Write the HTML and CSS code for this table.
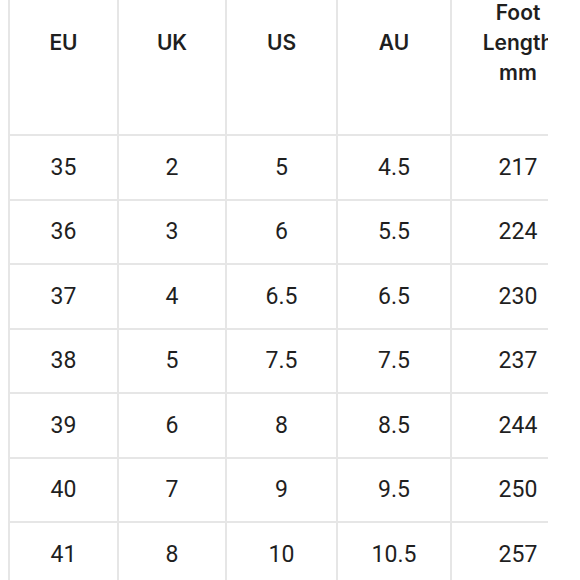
FILE: index.html
```html
<!DOCTYPE html>
<html lang="en">
<head>
<meta charset="utf-8">
<title>Size chart</title>
<link rel="stylesheet" href="styles.css">
</head>
<body>
<div class="chart">
  <table class="sizes">
    <colgroup>
      <col class="c-eu"><col class="c-uk"><col class="c-us"><col class="c-au"><col class="c-foot">
    </colgroup>
    <thead>
      <tr><th>EU</th><th>UK</th><th>US</th><th>AU</th><th>Foot<br>Length<br>mm</th></tr>
    </thead>
    <tbody>
      <tr><td>35</td><td>2</td><td>5</td><td>4.5</td><td>217</td></tr>
      <tr><td>36</td><td>3</td><td>6</td><td>5.5</td><td>224</td></tr>
      <tr><td>37</td><td>4</td><td>6.5</td><td>6.5</td><td>230</td></tr>
      <tr><td>38</td><td>5</td><td>7.5</td><td>7.5</td><td>237</td></tr>
      <tr><td>39</td><td>6</td><td>8</td><td>8.5</td><td>244</td></tr>
      <tr><td>40</td><td>7</td><td>9</td><td>9.5</td><td>250</td></tr>
      <tr><td>41</td><td>8</td><td>10</td><td>10.5</td><td>257</td></tr>
    </tbody>
  </table>
</div>
</body>
</html>
```

FILE: styles.css
```css
html, body {
  background: #ffffff;
}
body {
  margin: 0 8px;
  overflow: hidden;
  height: 580px;
  font-family: "Roboto", "Inter", sans-serif;
  color: #1f1f1f;
}
.chart {
  width: 540px;
  overflow: hidden;
  margin-top: -51px;
}
.sizes {
  border-collapse: collapse;
  table-layout: fixed;
  width: 576px;
}
.c-eu { width: 109px; }
.c-uk { width: 108px; }
.c-us { width: 111px; }
.c-au { width: 114px; }
.c-foot { width: 134px; }
.sizes th,
.sizes td {
  border: 2px solid #e6e6e6;
  text-align: center;
  vertical-align: middle;
  padding: 0;
  white-space: nowrap;
}
.sizes th {
  height: 183px;
  font-family: "Inter", "Roboto", sans-serif;
  font-size: 21px;
  font-weight: 600;
  line-height: 30px;
}
.sizes td {
  height: 62.5px;
  font-size: 23px;
  font-weight: 400;
}
```
